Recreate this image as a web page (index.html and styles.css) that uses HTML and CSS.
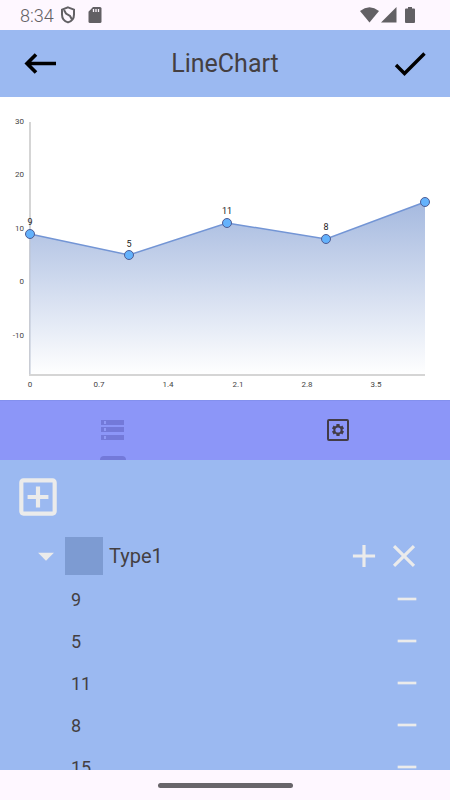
FILE: index.html
```html
<!DOCTYPE html>
<html lang="en">
<head>
  <meta charset="UTF-8">
  <meta name="viewport" content="width=device-width, initial-scale=1.0">
  <title>LineChart</title>
  <link rel="stylesheet" href="styles.css">
</head>
<body>
  <!-- System status bar -->
  <div class="status-bar">
    <div class="status-left">
      <span class="clock">8:34</span>
      <svg width="16" height="18" viewBox="0 0 16 18" fill="none" stroke="#626064" stroke-width="2">
        <path d="M8 1.4L14 3.6V8.4C14 12.2 11.6 15.2 8 16.4C4.4 15.2 2 12.2 2 8.4V3.6Z"/>
        <path d="M4 4L6 7.5L10 10L12 13.5"/>
      </svg>
      <svg class="sd-icon" width="14" height="16" viewBox="0 0 14 16">
        <path d="M5 0H12Q13.5 0 13.5 1.5V14.5Q13.5 16 12 16H2Q0.5 16 0.5 14.5V4.8Z" fill="#626064"/>
        <path d="M5.500 2V5M8 2V5M10.500 2V5" stroke="#fef7ff" stroke-width="1.3"/>
      </svg>
    </div>
    <div class="status-right">
      <svg width="19" height="16" viewBox="0 0 19 16"><path d="M0 4Q9.5 -3.4 19 4L9.5 15.5Z" fill="#626064"/></svg>
      <svg width="16" height="16" viewBox="0 0 16 16"><path d="M15.5 0V15.5H0Z" fill="#626064"/></svg>
      <svg class="battery-icon" width="10" height="16" viewBox="0 0 10 16"><path d="M3 0H7V1.5H9Q10 1.5 10 2.5V15Q10 16 9 16H1Q0 16 0 15V2.5Q0 1.5 1 1.5H3Z" fill="#626064"/></svg>
    </div>
  </div>

  <header class="app-bar">
    <button class="icon-button" type="button" aria-label="Back">
      <svg width="40" height="40" viewBox="0 0 40 40" fill="none" stroke="#000" stroke-width="3.6">
        <path d="M36 19.500H8M16 10.500L7 19.500L16 28.500"/>
      </svg>
    </button>
    <h1>LineChart</h1>
    <button class="icon-button" type="button" aria-label="Done">
      <svg width="40" height="40" viewBox="0 0 40 40" fill="none" stroke="#000" stroke-width="3.4">
        <path d="M6 21L14.500 29.500L34.500 9.500"/>
      </svg>
    </button>
  </header>

  <!-- Chart -->
  <div class="chart">
    <svg viewBox="0 0 450 303" role="img" aria-label="Line chart of Type1">
      <defs>
        <linearGradient id="area-fill" gradientUnits="userSpaceOnUse" x1="0" y1="105" x2="0" y2="278">
          <stop offset="0" stop-color="#a5b9df"/>
          <stop offset="1" stop-color="#ffffff"/>
        </linearGradient>
      </defs>
      <path class="axis" d="M30 25V278H425"/>
      <path d="M30 137L129 158L227 126L326 142L425 105V277H30Z" fill="url(#area-fill)"/>
      <path d="M30 137V277" stroke="#bcc3d3"/>
      <path class="line" d="M30 137L129 158L227 126L326 142L425 105"/>
      <g class="y-labels">
        <text x="24" y="27">30</text>
        <text x="24" y="80">20</text>
        <text x="24" y="134">10</text>
        <text x="24" y="187">0</text>
        <text x="24" y="241">-10</text>
      </g>
      <g class="x-labels">
        <text x="30" y="290">0</text>
        <text x="99" y="290">0.7</text>
        <text x="168" y="290">1.4</text>
        <text x="238" y="290">2.1</text>
        <text x="307" y="290">2.8</text>
        <text x="376" y="290">3.5</text>
      </g>
      <g class="points">
        <circle cx="30" cy="137" r="4.5"/>
        <circle cx="129" cy="158" r="4.5"/>
        <circle cx="227" cy="126" r="4.5"/>
        <circle cx="326" cy="142" r="4.5"/>
        <circle cx="425" cy="105" r="4.5"/>
      </g>
      <g class="point-labels">
        <text x="30" y="128">9</text>
        <text x="129" y="150">5</text>
        <text x="227" y="117">11</text>
        <text x="326" y="133">8</text>
      </g>
    </svg>
  </div>

  <nav class="tabs">
    <button class="tab active" type="button" aria-label="Data">
      <svg width="24" height="24" viewBox="0 0 24 24">
        <path d="M0 2H23V7H0ZM0 9H23V14H0ZM0 17H23V22H0Z" fill="#7379d9"/>
        <path d="M3 3H5V6H3ZM3 10H5V13H3ZM3 18H5V21H3Z" fill="#8f98f5"/>
      </svg>
    </button>
    <button class="tab" type="button" aria-label="Settings">
      <svg width="24" height="24" viewBox="0 0 24 24" fill="none" stroke="#433c45" stroke-width="2">
        <rect x="2" y="2" width="20" height="20" rx="1"/>
        <circle cx="12" cy="12" r="3.6"/>
        <path d="M12 6V8.500M12 15.500V18M6.800 9L9 10.300M15 13.700L17.200 15M6.800 15L9 13.700M15 10.300L17.200 9" stroke-width="3.2"/>
      </svg>
    </button>
  </nav>

  <!-- Data sets -->
  <main class="data-panel">
    <button class="add-type" type="button" aria-label="Add type">
      <svg width="50" height="50" viewBox="0 0 24 24">
        <path d="M19 3H5C3.900 3 3 3.900 3 5V19C3 20.100 3.900 21 5 21H19C20.100 21 21 20.100 21 19V5C21 3.900 20.100 3 19 3ZM19 19H5V5H19V19ZM11 17H13V13H17V11H13V7H11V11H7V13H11Z"/>
      </svg>
    </button>
    <section>
      <div class="type-row">
        <button type="button" aria-label="Collapse">
          <svg width="38" height="38" viewBox="0 0 24 24"><path d="M7 10L12 15L17 10Z"/></svg>
        </button>
        <button class="swatch" type="button" aria-label="Type1 color"></button>
        <h2>Type1</h2>
        <button type="button" aria-label="Add value">
          <svg width="38" height="38" viewBox="0 0 24 24"><path d="M19 13H13V19H11V13H5V11H11V5H13V11H19Z"/></svg>
        </button>
        <button type="button" aria-label="Remove type">
          <svg width="38" height="38" viewBox="0 0 24 24"><path d="M19 6.410L17.590 5L12 10.590L6.410 5L5 6.410L10.590 12L5 17.590L6.410 19L12 13.410L17.590 19L19 17.590L13.410 12Z"/></svg>
        </button>
      </div>
      <ul class="values">
        <li>
          <span>9</span>
          <button type="button" aria-label="Remove 9"><svg width="32" height="32" viewBox="0 0 24 24"><path d="M5 11H19V13H5Z"/></svg></button>
        </li>
        <li>
          <span>5</span>
          <button type="button" aria-label="Remove 5"><svg width="32" height="32" viewBox="0 0 24 24"><path d="M5 11H19V13H5Z"/></svg></button>
        </li>
        <li>
          <span>11</span>
          <button type="button" aria-label="Remove 11"><svg width="32" height="32" viewBox="0 0 24 24"><path d="M5 11H19V13H5Z"/></svg></button>
        </li>
        <li>
          <span>8</span>
          <button type="button" aria-label="Remove 8"><svg width="32" height="32" viewBox="0 0 24 24"><path d="M5 11H19V13H5Z"/></svg></button>
        </li>
        <li>
          <span>15</span>
          <button type="button" aria-label="Remove 15"><svg width="32" height="32" viewBox="0 0 24 24"><path d="M5 11H19V13H5Z"/></svg></button>
        </li>
      </ul>
    </section>
  </main>

  <div class="gesture-bar"><span></span></div>
</body>
</html>
```
FILE: styles.css
```css
:root {
  --surface: #fef7ff;
  --panel: #9bb9f1;
  --tabs: #8c96f8;
  --text: #443f42;
  --icon-light: #ebebeb;
}

* {
  margin: 0;
  padding: 0;
  box-sizing: border-box;
}

body {
  display: flex;
  flex-direction: column;
  height: 100vh;
  overflow: hidden;
  background-color: var(--surface);
  color: var(--text);
  font-family: Roboto, sans-serif;
}

button {
  border: 0;
  background: none;
  cursor: pointer;
}

svg {
  display: block;
}

/* Status bar */
.status-bar {
  display: flex;
  flex-shrink: 0;
  align-items: center;
  justify-content: space-between;
  height: 30px;
  padding: 0 35px 0 20px;
}

.status-left,
.status-right {
  display: flex;
  align-items: center;
}

.clock {
  margin-right: 6px;
  color: #626064;
  font-size: 18px;
  font-weight: 300;
}

.sd-icon {
  margin-left: 12px;
}

.status-right {
  gap: 2px;
}

.battery-icon {
  margin-left: 6px;
}

/* App bar */
.app-bar {
  display: flex;
  flex-shrink: 0;
  align-items: center;
  justify-content: space-between;
  height: 67px;
  padding: 0 20px;
  background-color: var(--panel);
}

.app-bar h1 {
  font-size: 25px;
  font-weight: 400;
  line-height: 32px;
}

/* Chart */
.chart {
  flex-shrink: 0;
  background-color: #fff;
}

.chart svg {
  width: 100%;
}

.chart text {
  fill: #444;
  font-size: 8px;
}

.axis {
  fill: none;
  stroke: #d5d5d5;
  stroke-width: 2;
}

.line {
  fill: none;
  stroke: #7395d5;
  stroke-width: 1.5;
}

.points circle {
  fill: #64b2fc;
  stroke: #4f5c93;
}

.y-labels {
  text-anchor: end;
}

.x-labels,
.point-labels {
  text-anchor: middle;
}

.chart .point-labels text {
  fill: #222;
  font-size: 9px;
}

/* Tabs */
.tabs {
  display: flex;
  flex-shrink: 0;
  height: 60px;
  background-color: var(--tabs);
  box-shadow: inset 0 1px #8390ee;
}

.tab {
  position: relative;
  display: flex;
  flex: 1;
  align-items: center;
  justify-content: center;
}

.tab.active::after {
  content: "";
  position: absolute;
  bottom: 0;
  left: 50%;
  width: 26px;
  height: 4px;
  margin-left: -13px;
  border-radius: 4px 4px 0 0;
  background-color: #7379d9;
}

/* Data panel */
.data-panel {
  flex: 1;
  min-height: 0;
  padding: 12px 27px 0;
  overflow: hidden;
  background-color: var(--panel);
}

.data-panel svg {
  fill: var(--icon-light);
}

.add-type {
  display: block;
  margin: 0 0 12px -14px;
}

.type-row {
  display: flex;
  align-items: center;
  height: 44px;
}

.type-row h2 {
  flex: 1;
  margin-left: 6px;
  font-size: 20px;
  font-weight: 400;
}

.type-row button:last-child {
  margin-left: 2px;
}

.swatch {
  width: 38px;
  height: 38px;
  background-color: #7d9bd2;
}

.values {
  padding-left: 44px;
  list-style: none;
}

.values li {
  display: flex;
  align-items: center;
  justify-content: space-between;
  height: 42px;
  font-size: 18px;
}

/* Gesture bar */
.gesture-bar {
  display: flex;
  flex-shrink: 0;
  align-items: center;
  justify-content: center;
  height: 30px;
}

.gesture-bar span {
  width: 30%;
  height: 5px;
  border-radius: 3px;
  background-color: #68656a;
}
```
